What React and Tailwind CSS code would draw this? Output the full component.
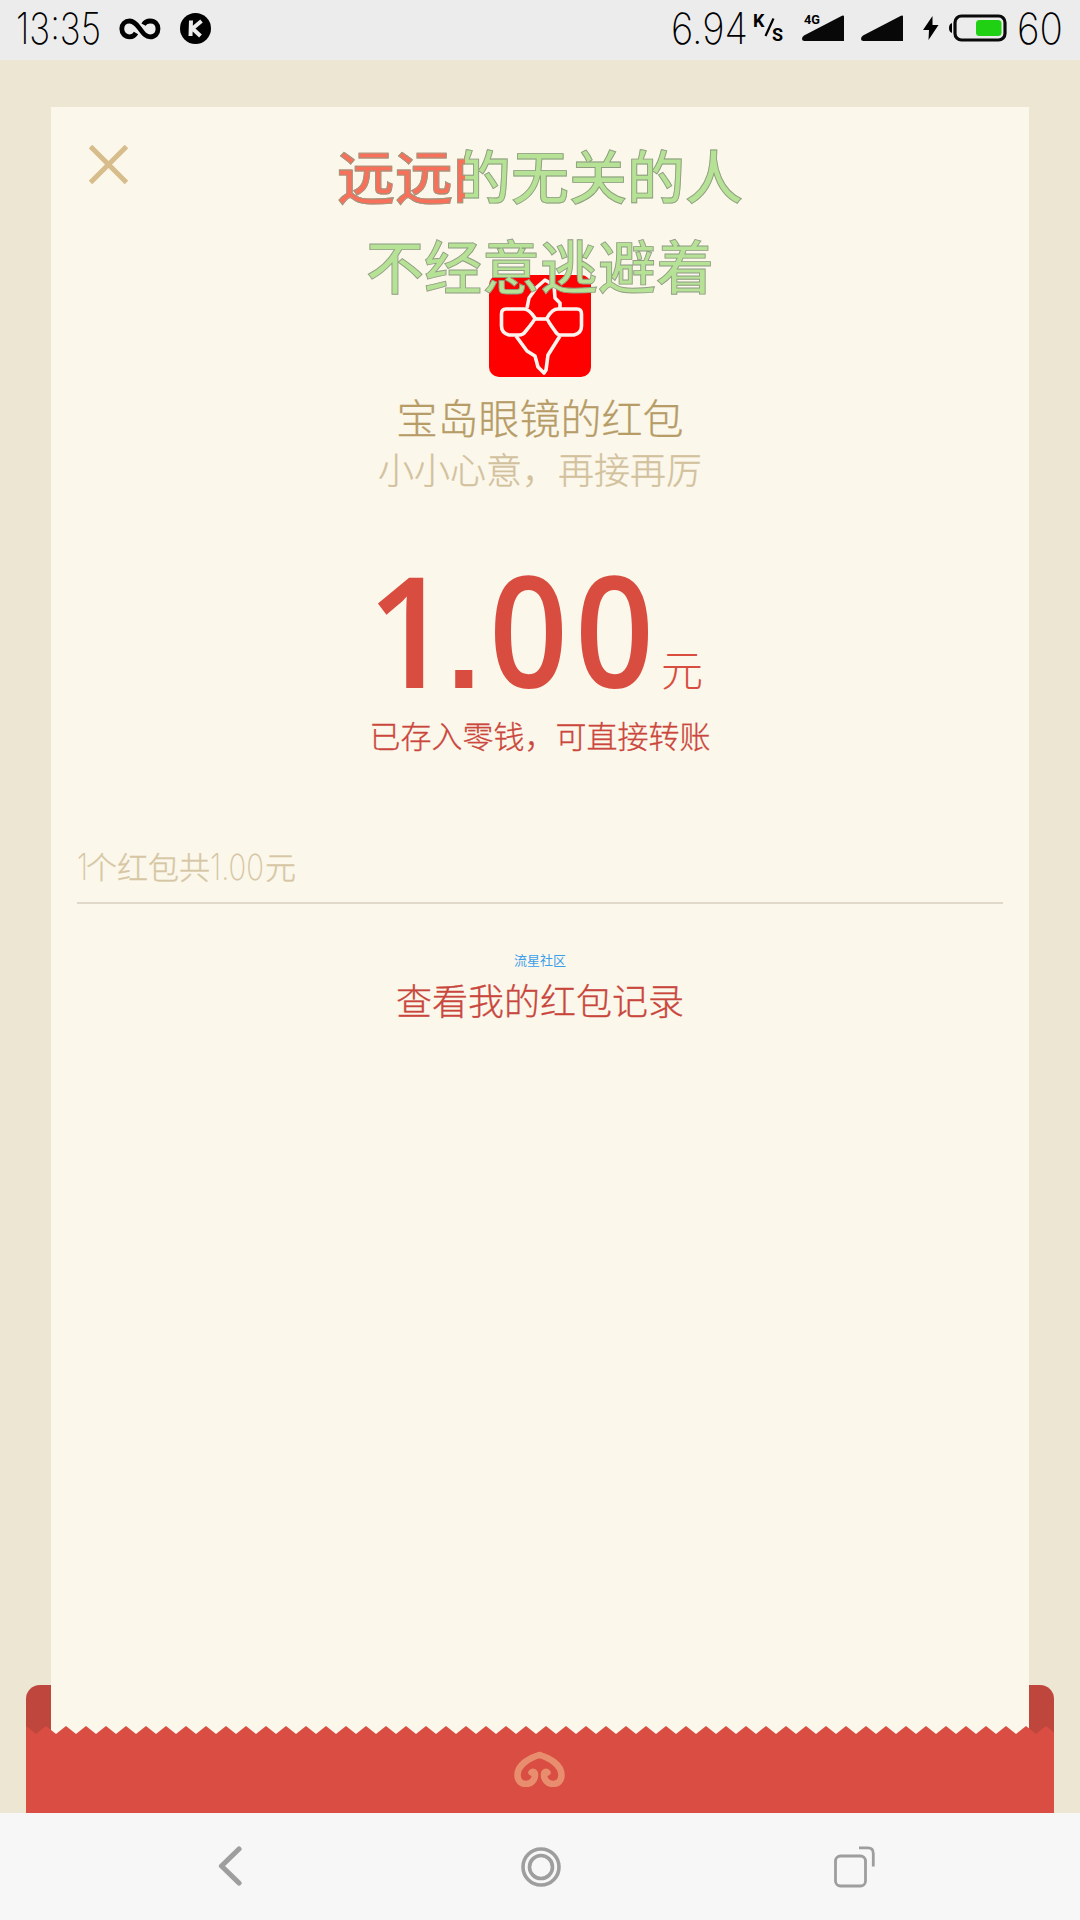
const teeth = (() => {
  let d = "M0 0";
  for (let x = 0; x < 1020; x += 20) d += ` L${x + 10} 8 L${x + 20} 0`;
  return d + " L1028 6.4 V9 H0 Z";
})();

// Narrow light numerals, condensed to a fixed width.
function Numerals({ text, width, size, className }) {
  return (
    <svg className={className} fontFamily="Inter, sans-serif" fontWeight="200" fontSize={size} fill="currentColor">
      <text x="0" y="44" textLength={width} lengthAdjust="spacingAndGlyphs">{text}</text>
    </svg>
  );
}

function StatusBar() {
  return (
    <header className="flex h-[60px] items-center bg-[#ececec] text-black">
      <Numerals text="13:35" width={85} size={43} className="ml-[16px] h-[60px] w-[103px] shrink-0 overflow-visible" />
      <svg className="-mt-[3px] h-[22px] w-[42px] shrink-0" viewBox="0 0 42 22" fill="none" stroke="#000" strokeWidth="4.8">
        <path d="M17 15 C15.5 17.8 13.5 18.8 10.7 18.8 C6 18.8 2.8 15.3 2.8 10.8 C2.8 6.3 6 3 10.7 3 C14.5 3 17 5.3 20.8 10.6 C24.8 16.2 27 18.8 31.2 18.8 C36 18.8 39 15.3 39 10.8 C39 6.3 36 3 31.2 3 C28 3 26 4 24.5 6.6" />
      </svg>
      <svg className="-mt-[4px] ml-[19px] h-[31px] w-[31px] shrink-0" viewBox="0 0 31 31">
        <circle cx="15.5" cy="15.5" r="15.5" />
        <path d="M11 7.5 L10.5 23 M21.5 8 L12.5 15.5 L20.5 23" fill="none" stroke="#ececec" strokeWidth="4" />
      </svg>
      <div className="-mt-[5px] ml-auto flex items-center">
        <Numerals text="6.94" width={77} size={43} className="mt-[5px] h-[60px] w-[82px] shrink-0 overflow-visible" />
        <svg className="h-[30px] w-[33px] shrink-0 overflow-visible" viewBox="0 0 33 30" fontFamily="Roboto, sans-serif" fontWeight="700">
          <text x="0" y="14" fontSize="18">K</text>
          <text x="19" y="28" fontSize="18">S</text>
          <path d="M12.5 23 L20.5 5.5" stroke="#000" strokeWidth="2.2" />
        </svg>
        <svg className="ml-[16px] h-[28px] w-[43px] shrink-0 overflow-visible" viewBox="0 0 43 28">
          <path d="M0 25 Q0 22.5 2 21.5 L40 1.8 Q42 1 42 2.5 V27 H2.5 Q0 27 0 25Z" fill="#080808" />
          <text x="2" y="10" fontSize="13" fontWeight="700" fontFamily="Roboto, sans-serif" textLength="16" lengthAdjust="spacingAndGlyphs">4G</text>
        </svg>
        <svg className="ml-[16px] h-[28px] w-[43px] shrink-0" viewBox="0 0 43 28">
          <path d="M0 25 Q0 22.5 2 21.5 L40 1.8 Q42 1 42 2.5 V27 H2.5 Q0 27 0 25Z" fill="#080808" />
        </svg>
        <svg className="ml-[19px] h-[24px] w-[16px] shrink-0" viewBox="0 0 16 24">
          <path d="M9.5 0 L0 14 H6 L5.5 24 L15.5 9 H9.5 Z" />
        </svg>
        <svg className="ml-[10px] h-[28px] w-[58px] shrink-0" viewBox="0 0 58 28">
          <path d="M3 9 V19 Q0 18 0 14 Q0 10 3 9Z" />
          <rect x="6" y="2" width="50" height="24" rx="6.5" fill="none" stroke="#0a0a0a" strokeWidth="3.2" />
          <rect x="27" y="6" width="25.5" height="16" rx="3.5" fill="#1fd112" />
        </svg>
        <Numerals text="60" width={46} size={43} className="ml-[10px] mt-[5px] h-[60px] w-[63px] shrink-0 overflow-visible" />
      </div>
    </header>
  );
}

function Lyrics() {
  return (
    <div className="absolute inset-x-0 top-[22px] text-center text-[58px] font-medium leading-[90px] [-webkit-text-stroke:0.9px_#929c85]">
      <p>
        <span className="bg-[linear-gradient(90deg,#f8705a_0_128px,#b6e295_128px)] bg-clip-text text-transparent">远远的无关的人</span>
      </p>
      <p className="text-[#b6e295]">不经意逃避着</p>
    </div>
  );
}

function ShopLogo() {
  return (
    <svg className="h-[102px] w-[102px]" viewBox="0 0 102 102" fill="none" stroke="#fff3ee" strokeWidth="3.6" strokeLinejoin="round">
      <rect width="102" height="102" rx="10" fill="#fe0000" stroke="none" />
      <path d="M38 33 L40 23 L48 12 L56 5 L65 10 L66 23 L71 28 L71 34" />
      <path d="M17 34 H35 Q40 34 46 43 Q46 45 36 57 Q34 60 30 60 H20 Q12.5 58 12.5 51 V39 Q12.5 34 17 34Z" />
      <path d="M88 34 H69 Q63 34 58 43 Q58 45 66 56 Q68 60 72 60 H85 Q92.5 58 92.5 51 V39 Q92.5 34 88 34Z" />
      <path d="M46 44 H58" />
      <path d="M27 61 L38 76 L46 81 L49 92 L55 98 L57 95 L59 80 L71 61" />
    </svg>
  );
}

function PaperCard() {
  return (
    <section className="relative mx-[51px] mt-[47px] flex h-[1578px] flex-col items-center bg-[#fbf7ea] font-light">
      <svg className="ml-[38px] mt-[38px] h-[39px] w-[39px] self-start" viewBox="0 0 39 39" stroke="#d8bd8c" strokeWidth="5">
        <path d="M1.5 1.5 L37.5 37.5 M37.5 1.5 L1.5 37.5" />
      </svg>
      <div className="mt-[91px]">
        <ShopLogo />
      </div>
      <h1 className="mt-[15px] text-[41px] leading-[48px] text-[#b79c68] [-webkit-text-stroke:0.3px_#b79c68]">宝岛眼镜的红包</h1>
      <p className="mt-[6px] text-[36px] leading-[44px] text-[#d2c19d] [-webkit-text-stroke:0.3px_#d2c19d]">小小心意，再接再厉</p>
      <div className="mt-[55px] flex h-[160px] w-[338px] items-end text-[#d94d41]">
        <svg className="h-[160px] w-[290px] shrink-0 overflow-visible" viewBox="0 0 290 160" fill="#d94d41" fontFamily="Open Sans, sans-serif" fontWeight="600" fontSize="154">
          <text x="-4" y="143" textLength="84" lengthAdjust="spacingAndGlyphs">1</text>
          <text x="76" y="143" fontFamily="Liberation Sans, sans-serif" fontWeight="700" fontSize="121">.</text>
          <text x="118" y="143" textLength="79" lengthAdjust="spacingAndGlyphs">0</text>
          <text x="204" y="143" textLength="79" lengthAdjust="spacingAndGlyphs">0</text>
        </svg>
        <span className="mb-[13px] text-[42px] leading-[48px]">元</span>
      </div>
      <p className="mt-[10px] text-[31px] leading-[40px] text-[#cb463c] [-webkit-text-stroke:0.3px_#cb463c]">已存入零钱，可直接转账</p>
      <div className="mt-[91px] flex h-[58px] w-[926px] border-b-2 border-[#e0d8c9] text-[31px] leading-[40px] text-[#d6c6a4] [-webkit-text-stroke:0.3px_#d6c6a4]">
        <Numerals text="1" width={11} size={36} className="-mt-[10px] h-[52px] w-[9px] shrink-0 overflow-visible" />
        <span>个红包共</span>
        <Numerals text="1.00" width={54} size={36} className="-mt-[10px] h-[52px] w-[55px] shrink-0 overflow-visible" />
        <span>元</span>
      </div>
      <p className="mt-[48px] text-[13px] font-normal leading-[16px] text-[#3d9eea]">流星社区</p>
      <p className="mt-[7px] text-[36px] leading-[48px] text-[#c9463d] [-webkit-text-stroke:0.3px_#c9463d]">查看我的红包记录</p>
      <Lyrics />
    </section>
  );
}

function Envelope() {
  return (
    <section className="mx-[26px] flex h-[128px] flex-col overflow-hidden rounded-t-[14px] bg-[#bf463d]">
      <div className="mx-[25px] h-[41px] shrink-0 bg-[#fbf7ea]" />
      <svg className="h-[9px] w-[1028px] shrink-0" viewBox="0 0 1028 9">
        <rect x="25" width="978" height="9" fill="#fbf7ea" />
        <path d={teeth} fill="#da4d42" />
      </svg>
      <div className="flex flex-1 justify-center bg-[#da4d42] pt-[16px]">
        <svg className="-ml-[2px] h-[36px] w-[51px]" viewBox="0 0 51 36" fill="none" stroke="#e88d6e" strokeWidth="6.5" strokeLinecap="round" strokeLinejoin="round">
          <path d="M25.5 4 C15 7 3.5 14 3.5 24 C3.5 30 7 33 12 33 C17.5 33 21 28.5 21 24 C21 21 19 20 17.5 21.5" />
          <path d="M25.5 4 C36 7 47.5 14 47.5 24 C47.5 30 44 33 39 33 C33.5 33 30 28.5 30 24 C30 21 32 20 33.5 21.5" />
        </svg>
      </div>
    </section>
  );
}

function NavBar() {
  return (
    <nav className="flex h-[107px] items-start bg-[#f7f7f7] pt-[33px]">
      <svg className="ml-[218px] h-[40px] w-[24px]" viewBox="0 0 24 40" fill="none" stroke="#9e9e9e" strokeWidth="5.2" strokeLinecap="round" strokeLinejoin="round">
        <path d="M21 3 L3.5 20 L21 37" />
      </svg>
      <svg className="ml-[279px] mt-[1px] h-[40px] w-[40px]" viewBox="0 0 40 40" fill="none" stroke="#9e9e9e" strokeWidth="3.6">
        <circle cx="20" cy="20" r="18" />
        <circle cx="20" cy="20" r="11.5" />
      </svg>
      <svg className="ml-[273px] h-[42px] w-[42px]" viewBox="0 0 42 42" fill="none" stroke="#9e9e9e" strokeWidth="2.8">
        <rect x="1.5" y="10" width="30" height="30" rx="5" />
        <path d="M25 1.8 H34 Q39.3 1.8 39.3 7.5 V20.5" />
      </svg>
    </nav>
  );
}

export default function App() {
  return (
    <div className="flex h-[1920px] w-[1080px] flex-col overflow-hidden bg-[#ede6d3] font-['Noto_Sans_CJK_SC',sans-serif]">
      <StatusBar />
      <main className="flex h-[1753px] flex-col">
        <PaperCard />
        <Envelope />
      </main>
      <NavBar />
    </div>
  );
}
